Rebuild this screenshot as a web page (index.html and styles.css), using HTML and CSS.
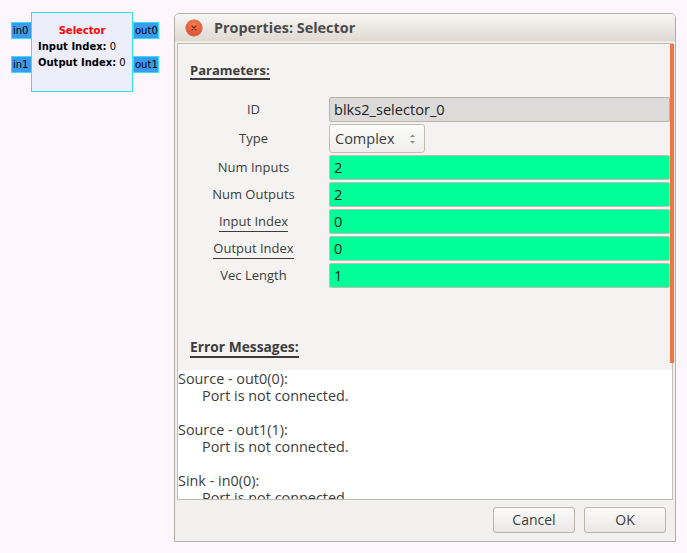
FILE: index.html
```html
<!DOCTYPE html>
<html>
<head>
<meta charset="utf-8">
<title>Properties: Selector</title>
<link rel="stylesheet" href="styles.css">
</head>
<body>
<div class="canvas">
  <div class="block">
    <div class="block-title">Selector</div>
    <div class="block-param"><b>Input Index:</b> 0</div>
    <div class="block-param"><b>Output Index:</b> 0</div>
    <div class="port port-in port-a">in0</div>
    <div class="port port-in port-b">in1</div>
    <div class="port port-out port-a">out0</div>
    <div class="port port-out port-b">out1</div>
  </div>

  <div class="dialog">
    <div class="titlebar">
      <div class="close-btn">
        <svg width="16" height="16" viewBox="0 0 16 16"><path d="M6 6 L10 10 M10 6 L6 10" stroke="#6b2a18" stroke-width="1.2" stroke-linecap="round"/></svg>
      </div>
      <div class="title">Properties: Selector</div>
    </div>
    <div class="dialog-body">
      <div class="frame">
        <div class="upper">
          <div class="upper-content">
            <div class="heading"><span class="heading-text">Parameters:</span></div>
            <div class="params">
              <div class="plabel">ID</div>
              <div class="field field-id">blks2_selector_0</div>
              <div class="plabel plabel-combo">Type</div>
              <div class="combo-cell">
                <div class="combo">
                  <span>Complex</span>
                  <svg width="7" height="14" viewBox="0 0 7 14"><path d="M1 5 L3.5 2.5 L6 5 Z" fill="#8a8a8a"/><path d="M1 9 L3.5 11.5 L6 9 Z" fill="#8a8a8a"/></svg>
                </div>
              </div>
              <div class="plabel">Num Inputs</div>
              <div class="field field-ok">2</div>
              <div class="plabel">Num Outputs</div>
              <div class="field field-ok">2</div>
              <div class="plabel"><span class="ul">Input Index</span></div>
              <div class="field field-ok">0</div>
              <div class="plabel"><span class="ul">Output Index</span></div>
              <div class="field field-ok">0</div>
              <div class="plabel">Vec Length</div>
              <div class="field field-ok">1</div>
            </div>
            <div class="heading heading-err"><span class="heading-text">Error Messages:</span></div>
          </div>
          <div class="scrollbar"></div>
        </div>
        <div class="messages">
          <div class="msg">Source - out0(0):</div>
          <div class="msg indent">Port is not connected.</div>
          <div class="msg blank">&nbsp;</div>
          <div class="msg">Source - out1(1):</div>
          <div class="msg indent">Port is not connected.</div>
          <div class="msg blank">&nbsp;</div>
          <div class="msg">Sink - in0(0):</div>
          <div class="msg indent">Port is not connected.</div>
        </div>
      </div>
      <div class="buttons">
        <div class="btn">Cancel</div>
        <div class="btn">OK</div>
      </div>
    </div>
  </div>
</div>
</body>
</html>
```
FILE: styles.css
```css
html, body {
  margin: 0;
  padding: 0;
  background: #fdf6fd;
}
body {
  width: 687px;
  height: 553px;
  overflow: hidden;
  font-family: "Open Sans", "DejaVu Sans", sans-serif;
}
.canvas {
  position: relative;
  width: 687px;
  height: 553px;
}

/* flowgraph block */
.block {
  position: absolute;
  left: 31px;
  top: 12px;
  width: 100px;
  height: 68px;
  border: 1px solid #2ee6f2;
  background: #eeeefb;
  font-family: "DejaVu Sans", sans-serif;
  font-size: 10px;
  color: #000;
  padding-top: 10px;
  box-sizing: content-box;
}
.block-title {
  text-align: center;
  color: #ff0000;
  font-weight: bold;
  line-height: 16px;
}
.block-param {
  line-height: 16px;
  padding-left: 6px;
  white-space: nowrap;
}
.port {
  position: absolute;
  height: 15px;
  line-height: 15px;
  border: 1px solid #2ee6f2;
  background: #3a9af0;
  font-family: "DejaVu Sans", sans-serif;
  font-size: 10px;
  color: #000;
  padding-left: 1px;
  box-sizing: content-box;
}
.port-in { left: -21px; width: 18px; }
.port-out { left: 101px; width: 23px; }
.port-a { top: 9px; }
.port-b { top: 43px; }

/* dialog window */
.dialog {
  position: absolute;
  left: 174px;
  top: 13px;
  width: 500px;
  height: 527px;
  border: 1px solid #b4ada5;
  border-radius: 5px 5px 0 0;
  background: #f2f1f0;
  display: flex;
  flex-direction: column;
  color: #3c3c3c;
  overflow: hidden;
}
.titlebar {
  height: 27px;
  flex: none;
  display: flex;
  align-items: center;
  padding-left: 11px;
  background: linear-gradient(#f8f7f5, #dfd9d1);
  border-bottom: 1px solid #ece8e3;
}
.close-btn {
  width: 16px;
  height: 16px;
  border-radius: 50%;
  background: radial-gradient(circle at 50% 35%, #f5845a, #e55a34 60%, #c9482a);
  box-shadow: 0 0 0 0.5px #b5452a;
  display: flex;
}
.title {
  margin-left: 12px;
  font-weight: bold;
  font-size: 14.4px;
  color: #4a4a4a;
  line-height: 20px;
}
.dialog-body {
  flex: 1;
  display: flex;
  flex-direction: column;
  padding: 1px 2px 0 2px;
}
.frame {
  border: 1px solid #c2bbb2;
  display: flex;
  flex-direction: column;
  height: 455px;
  flex: none;
}
.upper {
  height: 326px;
  flex: none;
  display: flex;
  background: #f4f3f1;
}
.upper-content {
  flex: 1;
  min-width: 0;
}
.scrollbar {
  width: 4px;
  margin-right: -2px;
  height: 319px;
  background: #f07542;
  flex: none;
}
.heading {
  padding-left: 12px;
  margin-top: 18px;
  line-height: 15px;
}
.heading-text {
  display: inline-block;
  font-weight: bold;
  font-size: 13px;
  color: #3c3c3c;
  border-bottom: 2px solid #3c3c3c;
}
.heading-err {
  margin-top: 51px;
}
.heading-err .heading-text {
  padding-bottom: 2px;
  font-size: 13.8px;
}
.params {
  margin-top: 17px;
  display: grid;
  grid-template-columns: 151px 1fr;
  grid-template-rows: 25px 29px 25px 25px 25px 25px 25px;
  row-gap: 2px;
}
.plabel {
  font-size: 13px;
  text-align: center;
  line-height: 25px;
  color: #3c3c3c;
}
.plabel-combo {
  line-height: 29px;
}
.ul {
  border-bottom: 1px solid #3c3c3c;
  padding-bottom: 1px;
}
.field {
  box-sizing: border-box;
  height: 25px;
  border: 1px solid #bab3aa;
  border-radius: 2px;
  padding-left: 4px;
  font-size: 14.6px;
  line-height: 23px;
  color: #1e1e1e;
}
.field-id {
  background: #dcdbd9;
}
.field-ok {
  background: #00ff99;
  border-color: #c4bdb5;
}
.combo-cell {
  display: flex;
}
.combo {
  box-sizing: border-box;
  width: 96px;
  height: 29px;
  border: 1px solid #c3bcb3;
  border-radius: 3px;
  background: linear-gradient(#fcfcfb, #efeeec);
  display: flex;
  align-items: center;
  justify-content: space-between;
  padding: 0 8px 0 5px;
  font-size: 14.5px;
  color: #3c3c3c;
}
.messages {
  flex: 1;
  background: #ffffff;
  overflow: hidden;
  font-size: 14.4px;
  line-height: 17px;
  color: #3c3c3c;
}
.msg {
  white-space: nowrap;
}
.indent {
  padding-left: 24px;
}
.buttons {
  display: flex;
  justify-content: flex-end;
  gap: 9px;
  padding: 7px 7px 0 0;
}
.btn {
  box-sizing: border-box;
  width: 82px;
  height: 26px;
  border: 1px solid #bbb4ab;
  border-radius: 3px;
  background: linear-gradient(#fbfbfa, #eae8e5);
  text-align: center;
  font-size: 14px;
  line-height: 24px;
  color: #3c3c3c;
}
```
